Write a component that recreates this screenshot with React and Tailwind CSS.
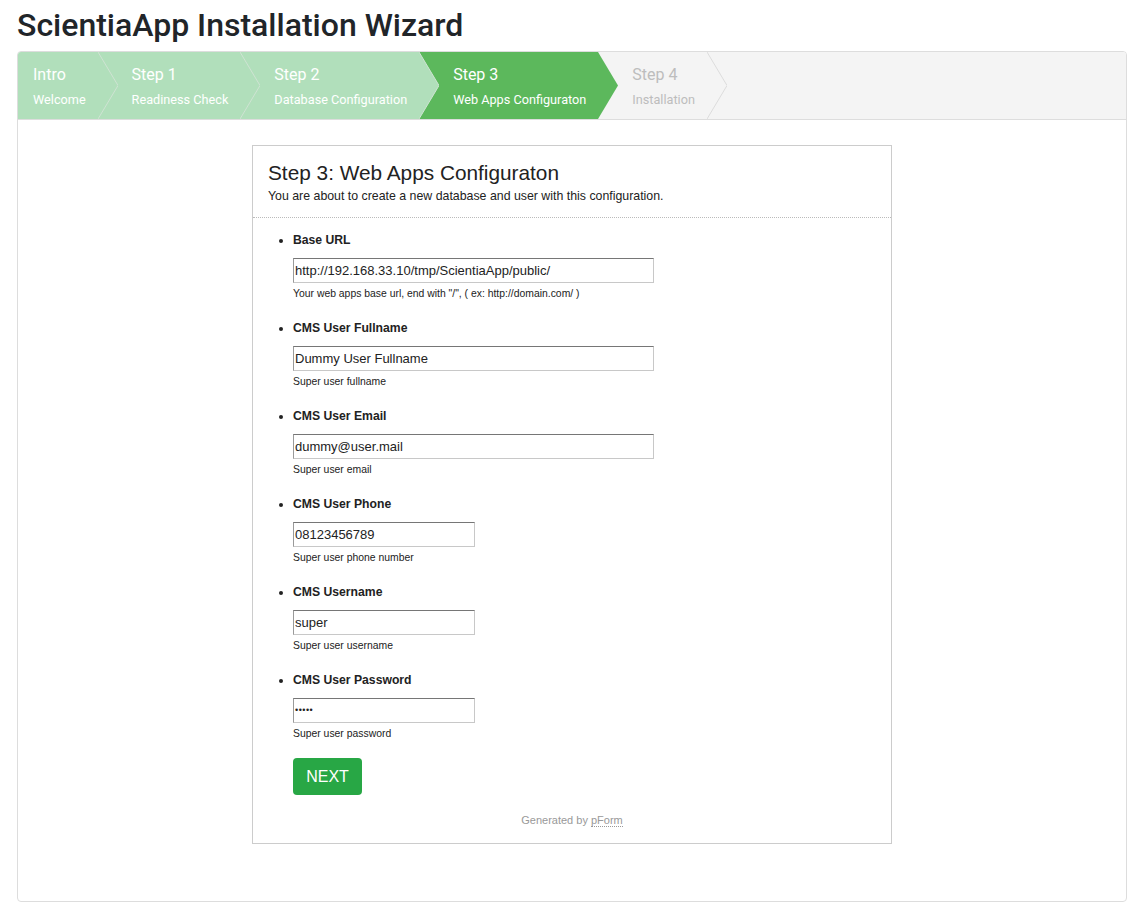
import React from 'react';

const steps = [
  { title: 'Intro', sub: 'Welcome', state: 'done', z: 'z-[5]', first: true },
  { title: 'Step 1', sub: 'Readiness Check', state: 'done', z: 'z-[4]' },
  { title: 'Step 2', sub: 'Database Configuration', state: 'done', z: 'z-[3]' },
  { title: 'Step 3', sub: 'Web Apps Configuraton', state: 'active', z: 'z-[2]' },
  { title: 'Step 4', sub: 'Installation', state: 'todo', z: 'z-[1]' },
];

const fields = [
  { label: 'Base URL', value: 'http://192.168.33.10/tmp/ScientiaApp/public/', help: 'Your web apps base url, end with "/", ( ex: http://domain.com/ )', wide: true },
  { label: 'CMS User Fullname', value: 'Dummy User Fullname', help: 'Super user fullname', wide: true },
  { label: 'CMS User Email', value: 'dummy@user.mail', help: 'Super user email', wide: true },
  { label: 'CMS User Phone', value: '08123456789', help: 'Super user phone number' },
  { label: 'CMS Username', value: 'super', help: 'Super user username' },
  { label: 'CMS User Password', value: '•••••', help: 'Super user password', password: true },
];

const fill = { done: '#b1dfbb', active: '#5cb85c', todo: '#f4f4f4' };

function Step({ step }) {
  const color = fill[step.state];
  const textCls = step.state === 'todo' ? 'text-[#bdbdbd]' : 'text-white';
  const bg =
    step.state === 'done' ? 'bg-[#b1dfbb]' : step.state === 'active' ? 'bg-[#5cb85c]' : 'bg-[#f4f4f4]';
  return (
    <div
      className={`relative ${step.z} ${bg} ${step.first ? 'pl-[15px]' : 'pl-[34px]'} pr-[12px] h-[67px] flex flex-col justify-center`}
    >
      <div className={`text-[16px] leading-[20px] mt-[1px] ${textCls}`}>{step.title}</div>
      <div className={`text-[12.7px] leading-[16px] mt-[7px] ${textCls}`}>{step.sub}</div>
      <svg className="absolute top-0 right-[-20px]" width="20" height="67" viewBox="0 0 20 67">
        <polygon points="0,0 20,33.5 0,67" fill={color} />
        <polyline
          points="0,0 20,33.5 0,67"
          fill="none"
          stroke={step.state === 'todo' ? '#dcdcdc' : step.state === 'done' ? '#cfe3d3' : 'none'}
          strokeWidth="1"
        />
      </svg>
    </div>
  );
}

export default function App() {
  return (
    <div className="min-h-screen bg-white pl-[17px] pr-[16px] text-[#222]" style={{ fontFamily: '"Liberation Sans", Arial, sans-serif' }}>
      <h1
        className="pt-[6px] pb-[7px] text-[32px] leading-[38px] font-medium text-[#212529]"
        style={{ fontFamily: 'Roboto, sans-serif' }}
      >
        ScientiaApp Installation Wizard
      </h1>
      <div className="border border-[#ddd] rounded-[4px] pb-[57px] overflow-hidden">
        <div className="flex bg-[#f4f4f4] border-b border-[#ddd]" style={{ fontFamily: 'Roboto, sans-serif' }}>
          {steps.map((s) => (
            <Step key={s.title} step={s} />
          ))}
        </div>
        <div className="w-[640px] mx-auto mt-[25px] border border-[#ccc]">
          <div className="px-[15px] pt-[15px] pb-[13px] border-b border-dotted border-[#bbb]">
            <h2 className="text-[20.8px] leading-[24px] text-[#222]">Step 3: Web Apps Configuraton</h2>
            <p className="text-[12.35px] leading-[16px] mt-[3px] text-[#222]">
              You are about to create a new database and user with this configuration.
            </p>
          </div>
          <ul className="pl-[40px] pt-[13px] list-disc">
            {fields.map((f) => (
              <li key={f.label} className="mb-[17px] text-[12px] marker:text-[#222]">
                <div className="font-bold text-[12.2px] leading-[16px] text-[#222]">{f.label}</div>
                <div
                  className={`mt-[10px] h-[25px] ${f.wide ? 'w-[361px]' : 'w-[182px]'} border border-[#c8c8c8] border-t-[#767676] border-l-[#9a9a9a] flex items-center px-[1px] ${f.password ? 'text-[9px] tracking-[0.5px]' : 'text-[13px]'} text-[#222]`}
                >
                  {f.value}
                </div>
                <div className="text-[10.4px] leading-[16px] mt-[3px] text-[#222]">{f.help}</div>
              </li>
            ))}
          </ul>
          <div className="pl-[40px] -mt-[1px]">
            <button className="w-[69px] h-[37px] rounded-[4px] bg-[#28a745] text-white text-[16px]">NEXT</button>
          </div>
          <div className="text-center text-[11px] text-[#999] pt-[17px] pb-[15px] leading-[16px]">
            Generated by{' '}
            <span className="border-b border-dotted border-[#999]">pForm</span>
          </div>
        </div>
      </div>
    </div>
  );
}
